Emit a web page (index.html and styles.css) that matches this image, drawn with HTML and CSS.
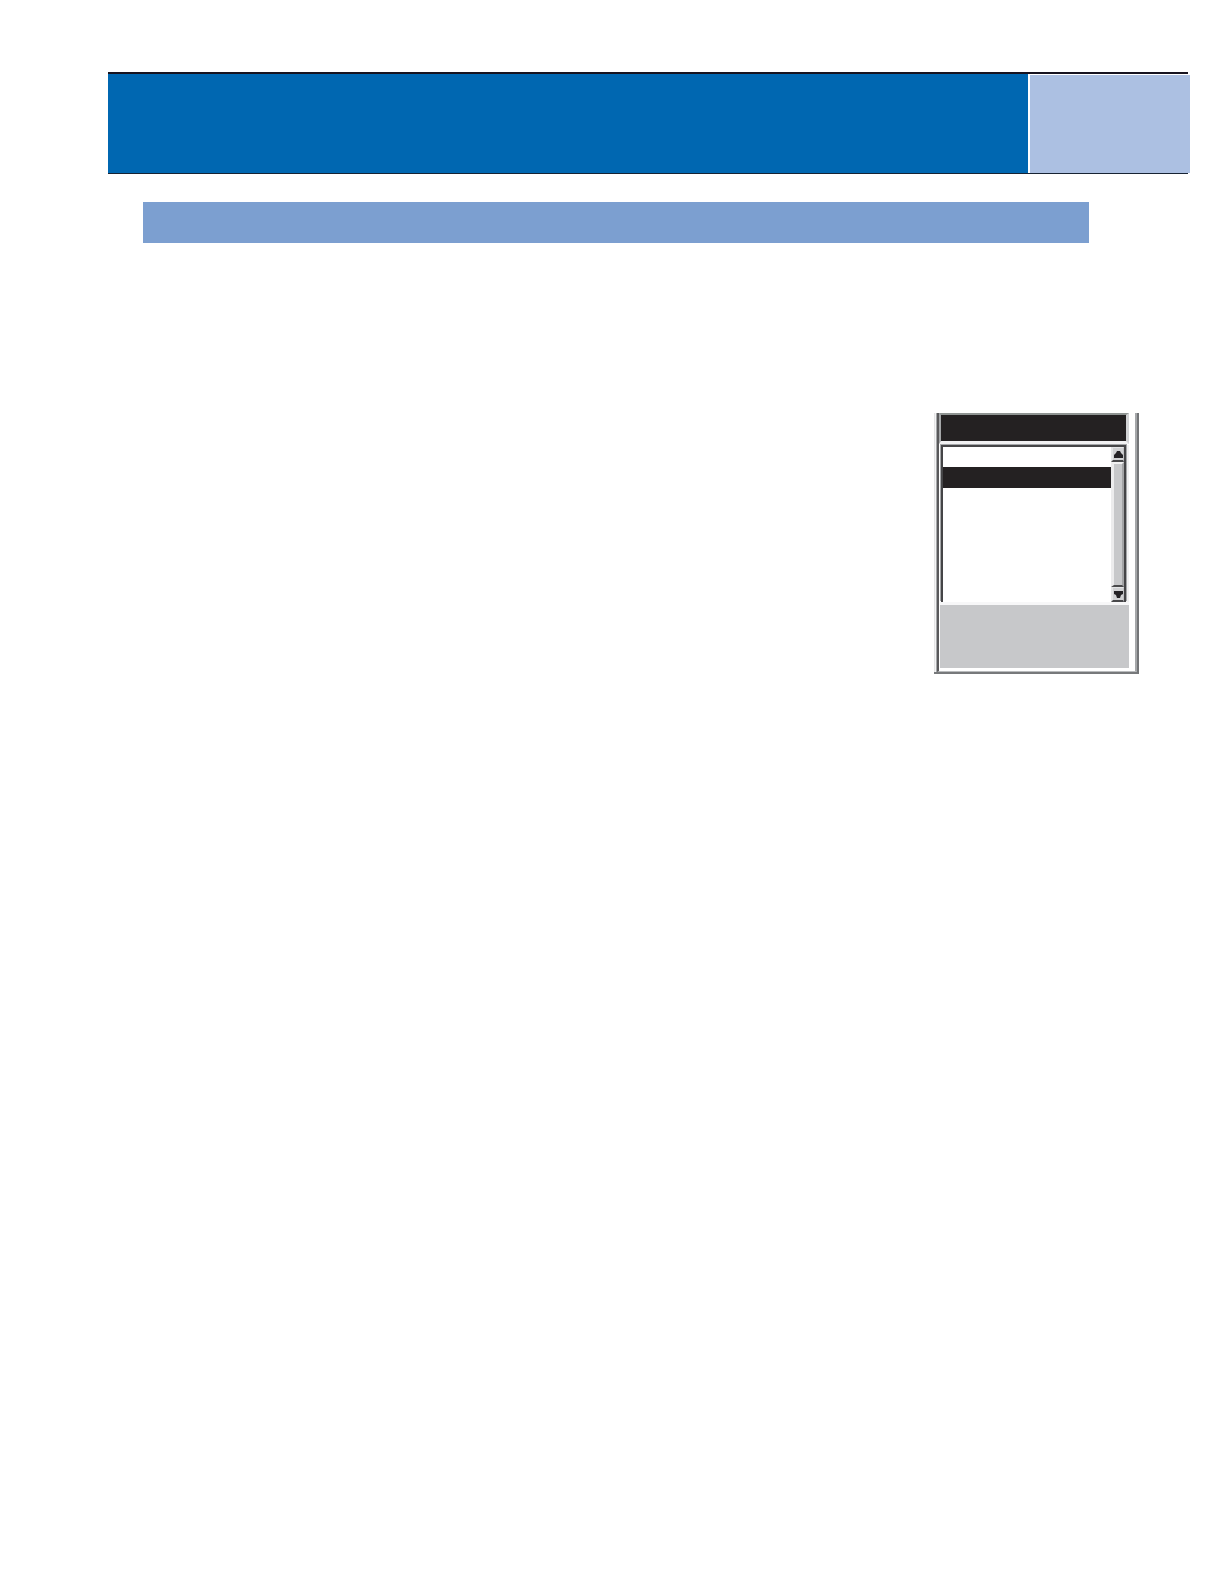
FILE: index.html
```html
<!DOCTYPE html>
<html lang="en">
<head>
<meta charset="utf-8">
<meta name="viewport" content="width=device-width, initial-scale=1">
<link rel="stylesheet" href="styles.css">
</head>
<body>
<header class="banner">
  <div class="banner-title"></div>
  <div class="banner-tab"></div>
</header>
<main class="content">
  <div class="section-bar"></div>
  <section class="window">
    <div class="window-body">
      <div class="window-title"></div>
      <div class="list">
        <div class="list-items"><div class="list-selected"></div></div>
        <div class="scrollbar">
          <button class="scroll-button" type="button">
            <svg width="9" height="7" viewBox="0 0 9 7"><path d="M3 0h3l1 2 2 2v3H0V4l2-2z" fill="#242225"/></svg>
          </button>
          <div class="scroll-thumb"></div>
          <button class="scroll-button" type="button">
            <svg width="9" height="7" viewBox="0 0 9 7"><path d="M0 0h9v3L7 4 6 7H3L2 4 0 3z" fill="#242225"/></svg>
          </button>
        </div>
      </div>
      <div class="window-footer"></div>
    </div>
  </section>
</main>
</body>
</html>
```
FILE: styles.css
```css
* {
  box-sizing: border-box;
}

body {
  margin: 0;
  min-height: 100vh;
  padding-top: 72px;
  background: #fff;
  font-family: "Liberation Sans", Arial, sans-serif;
}

.banner {
  display: flex;
  gap: 2px;
  height: 102px;
  margin: 0 36px 0 108px;
  border-top: 2px solid #17131f;
  border-bottom: 1px solid #172333;
}

.banner-title {
  flex: 1;
  background: #0067b1;
}

.banner-tab {
  flex: 0 0 160px;
  margin: 1px -2px 0 0;
  background: #acc0e2;
}

.content {
  display: flex;
  flex-direction: column;
  padding: 28px 85px 0 143px;
}

.section-bar {
  height: 41px;
  margin-right: 50px;
  background: #7c9fd0;
}

/* Bevelled window frame */
.window {
  align-self: flex-end;
  width: 205px;
  margin-top: 170px;
  padding-left: 3px;
  border-right: 2px solid #737577;
  border-bottom: 2px solid #77797b;
  background: linear-gradient(90deg, #e4e4e5 1px, #f4f4f5 1px, #f4f4f5 2px, #a5a7a9 2px, #a5a7a9 3px, transparent 3px);
}

.window-body {
  padding: 0 6px 3px 0;
  border-left: 2px solid #59595b;
  border-right: 2px solid #a5a7a9;
  border-bottom: 1px solid #b9bbbd;
}

.window-title {
  height: 31px;
  border: solid;
  border-width: 2px 3px 3px 2px;
  border-color: #8f9492 #d2d3d5 #f1f1f2 #a5a7a9;
  background: #242122;
}

.list {
  display: flex;
  height: 157px;
  margin: 1px 3px 0 2px;
  border: solid #454547;
  border-width: 2px 2px 0 2px;
  box-shadow: -1px -1px #a5a7a9, 1px -1px #a5a7a9, 3px 0 #f1f1f2;
}

.list-items {
  flex: 1;
  padding-top: 20px;
  background: #fff;
}

.list-selected {
  height: 21px;
  background: #242122;
}

.scrollbar {
  display: flex;
  flex: 0 0 13px;
  flex-direction: column;
}

.scroll-button {
  display: flex;
  flex: 0 0 15px;
  align-items: center;
  justify-content: center;
  width: 13px;
  padding: 0;
  border: solid;
  border-width: 1px 1px 2px 2px;
  border-color: #e5e6e7 #bfc0c2 #48484a #e5e6e7;
  background: #d0d1d3;
}

.scroll-thumb {
  flex: 1;
  border: solid;
  border-width: 2px 2px 2px 3px;
  border-color: #f1f1f2 #a3a4a6 #4a4a4c #ececed;
  background: #c7c8ca;
}

.window-footer {
  height: 66px;
  margin-left: 1px;
  border-top: 3px solid #f7f7f8;
  background: #c7c8ca;
}
```
